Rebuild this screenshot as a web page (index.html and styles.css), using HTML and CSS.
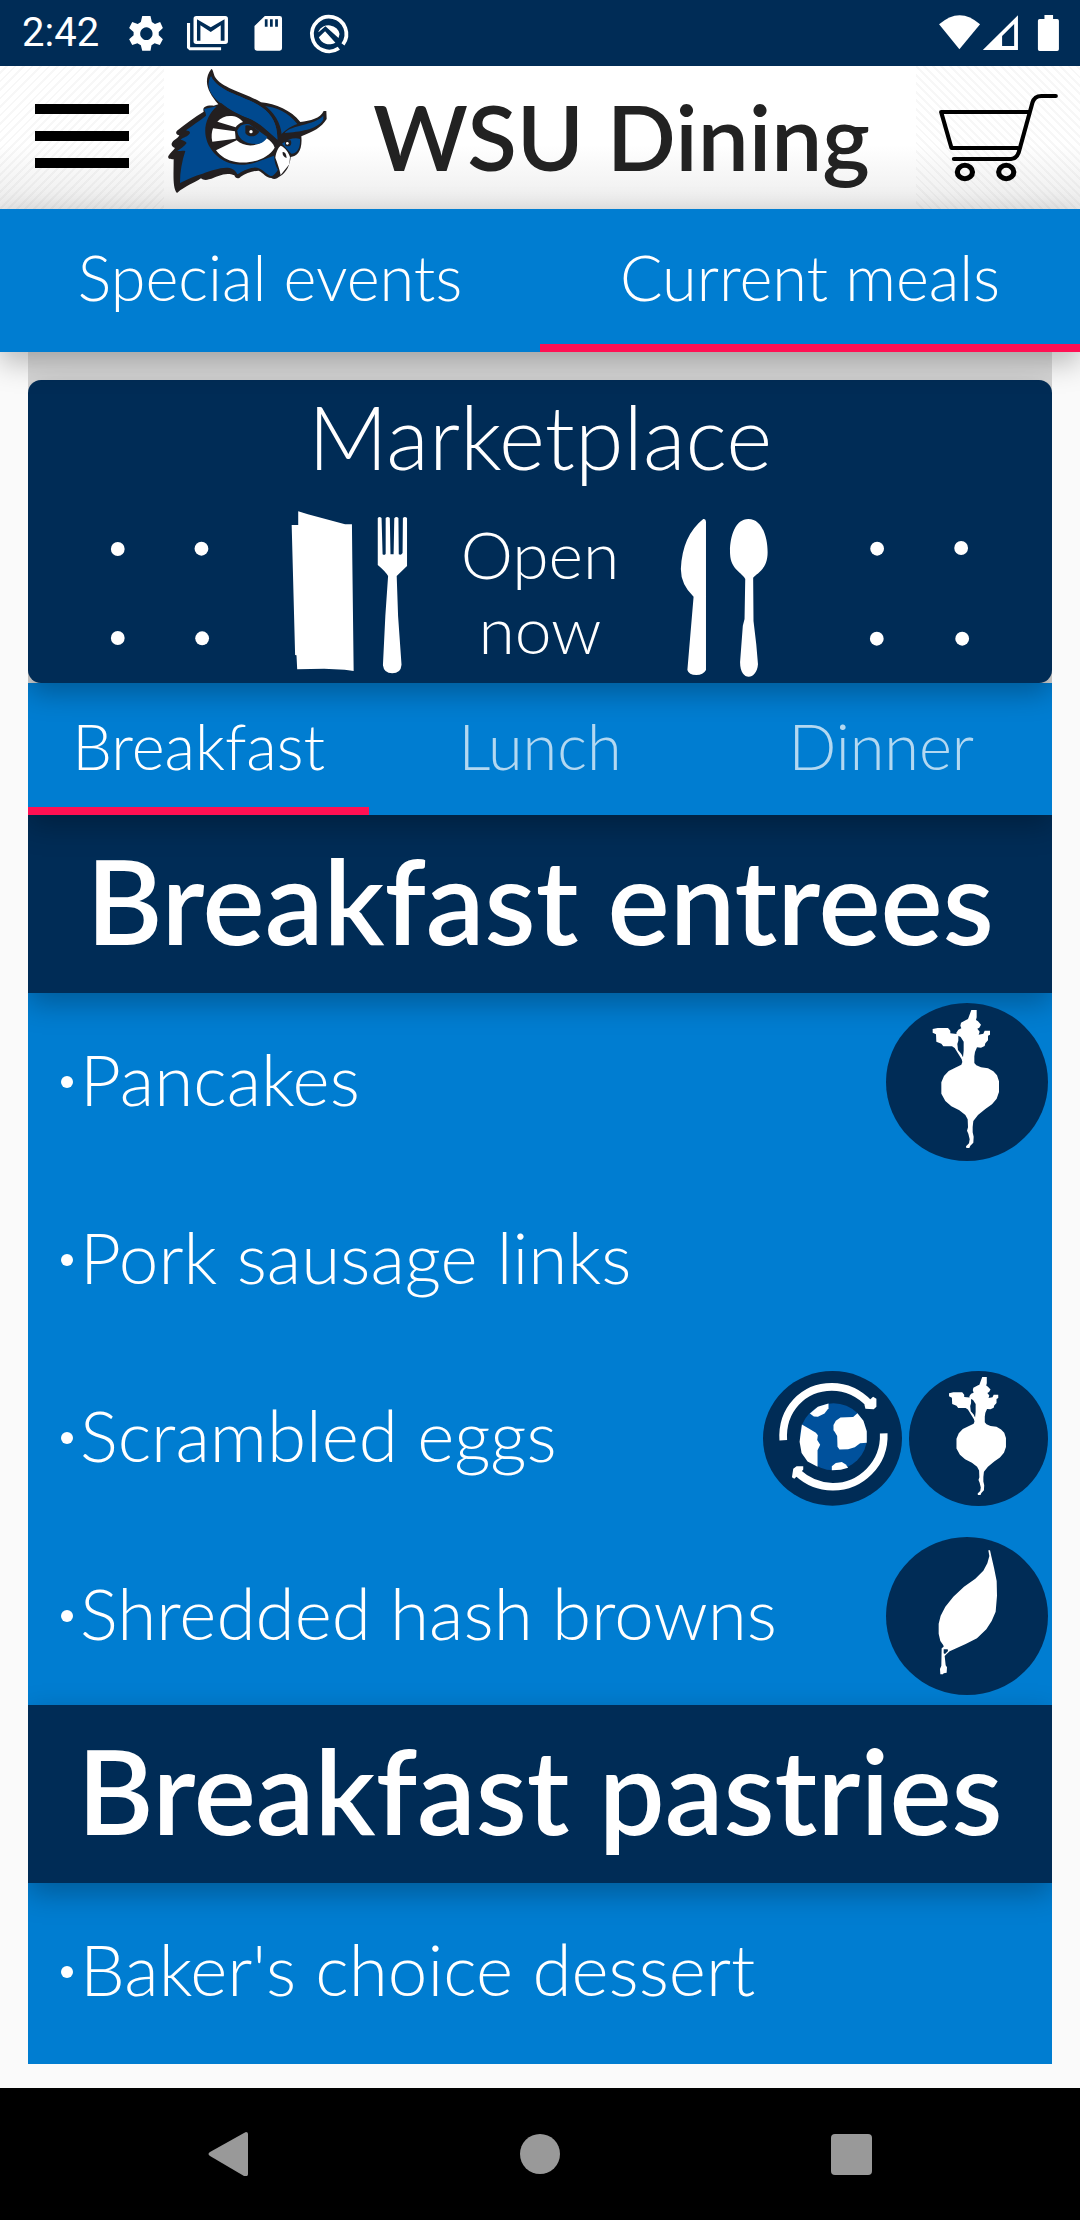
FILE: index.html
```html
<!DOCTYPE html>
<html lang="en">
<head>
<meta charset="utf-8">
<meta name="viewport" content="width=device-width, initial-scale=1">
<title>WSU Dining</title>
<link rel="stylesheet" href="styles.css">
</head>
<body>
<svg class="defs" aria-hidden="true">
  <symbol id="beet" viewBox="437 67 486 474" preserveAspectRatio="none">
    <ellipse cx="680" cy="304" rx="243" ry="237" fill="#002c56"/>
    <path fill="#fff" d="M693 88h16v22l-2 8 6 4 9 10-5 9-6 3 7 9-3 9 14-3 4-9h16v12l-6 3v14l-8 9-2 8-11 5-12-1-6 14-2 13v20l6 7 14 6 21 3 16 9 11 12 6 18v32l-7 20-14 17-20 14-22 18-14 18-2 18v16l3 13-1 18-9 9-3 7h-9l-1-5 9-9 2-12-4-17-4-9 3-10-1-24-7-13-18-14-24-12-18-16-12-22v-34l8-19 14-15 18-9 20-10 3-8-2-8-21-34-8-5h-26l-6-8-15-6-1-22-10-5v-11l15-3h31l7 8v8l19 2 5 6v14l-3 10 2 18 10 12 5 10 2-20v-27l-9-14-12-6-1-7 6-9 9-4-3-8 2-9 15-8 6-3zM688 168l6 3-2 12 2 12 4 5-6 16-2 20h-6v-40z"/>
  </symbol>
  <symbol id="leaf" viewBox="437 590 486 474" preserveAspectRatio="none">
    <ellipse cx="680" cy="827" rx="243" ry="237" fill="#002c56"/>
    <path fill="#fff" d="M744 630h5l4 18 8 34 8 40 1 44-4 48-12 28-16 25-28 27-34 17-48 22-9 8-6 6 3 28 4 6-1 16-9 2-2 3h-8l-1-16 4-10 1-52 6-5-1-4-9-13-5-22v-30l6-24 14-27 24-30 32-30 34-24 24-24 12-22 6-22z"/>
    <path fill="#002c56" d="M610 927h12l1 5-9 9-4-2z"/>
  </symbol>
  <symbol id="earth" viewBox="69 88 418 407" preserveAspectRatio="none">
    <ellipse cx="278" cy="291" rx="209" ry="203" fill="#002c56"/>
    <circle cx="281" cy="286" r="101" fill="#00519c"/>
    <g fill="#fff">
      <path d="M186 249l22 13 20 12 6 8-2 14 9 14-8 17v50l-30-16-18-26-6-34z"/>
      <path d="M210 216l24-20 32-10v14l-12 16-20 10-12-1z"/>
      <path d="M288 238l14-10 38-1 13-12 18 23 10 32v34l-20 2-16 12-20 6-26 1-6-9-1-32-7-12-4-5v-16z"/>
      <path d="M276 387v-12l12-10 18-3 12 8 7 10-22 6z"/>
    </g>
    <g fill="none" stroke="#fff" stroke-width="23" stroke-linejoin="round">
      <path d="M130 297C124 205 190 136 276 136c46 0 82 18 114 52"/>
      <path d="M432 276c4 92-70 162-154 161-42-1-76-16-104-42"/>
    </g>
    <path fill="#fff" d="M400 166l10 6v24l-8 7-25-1-3-12zM160 383l10-8h20v10l-12 14-15 14-7-5z"/>
  </symbol>
</svg>

<div class="status">
  <span class="clock">2:42</span>
  <svg class="status-left" viewBox="0 0 240 66" aria-hidden="true">
    <g transform="translate(-120) scale(.34436 .33333)" fill="#fff">
      <path fill-rule="evenodd" d="M413 48h24l4 18 9 6 15-6 8 18-12 12v10l12 12-9 17-15-5-9 6-3 16h-24l-4-16-10-6-15 5-9-17 13-12v-10l-13-12 9-18 16 6 9-6zM425 82a18 19 0 1 0 .1 0z"/>
      <path d="M543 69h9v73h90v9h-92l-7-7z"/>
      <path fill-rule="evenodd" d="M570 48h84q8 0 8 8v68q0 8-8 8h-84q-8 0-8-8V56q0-8 8-8zM572 58v64h10V76l30 20 29-20v46h11V58l-40 24z"/>
      <path fill-rule="evenodd" d="M769 48h43q7 0 7 7v90q0 7-7 7h-66q-7 0-7-7V78zM769 58v22h8V58zM784 58v22h8V58zM799 58v22h8V58z"/>
      <path fill="none" stroke="#fff" stroke-width="11" d="M984 145A50 52 0 1 1 996 133"/>
      <path d="M925 94a32 30 0 0 1 61 8l-3 12-38-35-20 18zM926 112l18-18 30 34a32 30 0 0 1-48-16z"/>
    </g>
  </svg>
  <svg class="status-right" viewBox="0 0 130 66" aria-hidden="true">
    <g transform="translate(-393) scale(.34436 .33333)" fill="#fff">
      <path d="M1156 73q60-55 119 0l-60 75z"/>
      <path fill-rule="evenodd" d="M1385 46v104h-102zM1374 72l-35 36v30h35z"/>
      <path d="M1462 45h25v12h12q5 0 5 5v86q0 5-5 5h-51q-5 0-5-5V62q0-5 5-5h14z"/>
    </g>
  </svg>
</div>

<header class="appbar">
  <button class="tool menu" aria-label="Menu"><span></span><span></span><span></span></button>
  <svg class="owl" viewBox="54 21 477 375" role="img" aria-label="WSU owl">
    <path fill="#231f20" d="M184 24c5 0 6 14 11 24 20 34 92 48 138 76 44 4 90 24 118 59 30-4 60-10 70-33h8l1 24c-16 26-40 38-76 52 4 42-12 60-32 62-2 24-12 46-32 58-10 8-18 10-26 5-18-2-22-14-38-22-20 0-40 10-54 18-6 8-16 6-19-4-26-12-50 4-76 12-10 4-18 2-24-3-20 14-46 22-72 44-14-14-10-60-10-101-14 0-18-2-16-10 6-10 14-16 20-24-10-4-12-10-9-16 8-12 18-12 22-22-10-2-12-8-7-14 26-20 50-40 80-57-4-12 4-20 30-18l14-4c-30-36-48-70-21-106z"/>
    <g fill="#00498f">
      <path d="M183 46c24 50 102 58 154 94 28 20 46 50 45 96-30-24-50-50-88-64-60-26-142-70-111-126z"/>
      <path d="M338 134c42 4 78 20 104 55-22 8-40 20-50 34-4-38-22-66-54-89z"/>
      <path d="M404 216c20-26 88-22 116-52v12c-18 30-72 36-116 40z"/>
      <path d="M200 136c-40 38-48 94-8 140 30 34 78 42 120 30l60-22c2 18 4 30 12 42-8 14-18 22-24 18-14-6-28-26-48-24-22 2-36 12-50 20-16-34-62-16-104-2-24 6-44 16-68 28 0-34 6-66 16-96-8-2-10 0-24 0 10-8 20-12 28-24-4-6-10-8-18-10 8-8 22-8 28-20 0-6-6-6-12-8 18-14 40-28 60-44 0-8-4-14-6-20z"/>
    </g>
    <ellipse cx="280" cy="232" rx="100" ry="76" fill="#231f20"/>
    <g fill="#fff">
      <path d="M202 182c12-14 30-20 50-16 16 4 22 12 27 17-12 4-18 10-22 16z"/>
      <path d="M189 202l66 9 2 22-70 9c-4-14-2-28 2-40z"/>
      <path d="M198 268l62-30c24 22 66 20 90-6 12 8 20 16 24 28-20 34-70 50-116 43-26-4-46-16-60-35z"/>
      <path d="M376 290c2-18 10-32 16-36 14 6 24 20 28 34l-2 22-26 32c-4-20-10-36-16-52z"/>
    </g>
    <g fill="#00498f">
      <path d="M262 208c8-16 20-22 36-18l54 38c-12 24-36 24-58 18-20-6-32-22-32-38z"/>
      <path d="M396 248c16-14 40-20 54-14 2 28-10 44-26 44z"/>
      <path d="M183 46c24 50 102 58 154 94 28 20 46 50 45 96-30-24-50-50-88-64-60-26-142-70-111-126z"/>
    </g>
    <path fill="none" stroke="#231f20" stroke-width="7" d="M210 128c24 20 56 38 84 48 38 16 60 42 88 66M392 222c-4-38-22-66-54-89"/>
    <path fill="#231f20" d="M286 194c12-4 28 4 42 18-10 18-34 18-42 4zM404 238h18c6 14-4 22-16 16zM398 273q10-2 12 18-14-4-12-18z"/>
    <circle cx="303" cy="212" r="5" fill="#fff"/><circle cx="412" cy="247" r="4" fill="#fff"/>
  </svg>
  <h1>WSU Dining</h1>
  <button class="tool cart" aria-label="Cart">
    <svg viewBox="0 0 124 96" aria-hidden="true">
      <g transform="translate(-395 -91) scale(.34436 .33333)" fill="none" stroke="#000" stroke-width="12" stroke-linecap="round" stroke-linejoin="round">
        <path d="M1416 339H1162l30 108h192M1495 291h-42q-20 0-26 20l-40 150q-6 18-22 19H1199"/>
        <g stroke-width="15"><ellipse cx="1231" cy="519" rx="22" ry="20"/><ellipse cx="1351" cy="519" rx="22" ry="20"/></g>
      </g>
    </svg>
  </button>
</header>

<nav class="tabs main-tabs">
  <button>Special events</button>
  <button class="active" aria-current="page">Current meals</button>
</nav>

<main>
  <section class="venue">
    <h2>Marketplace</h2>
    <div class="venue-row">
      <svg viewBox="0 0 432 180" aria-hidden="true">
        <g transform="translate(-28 -10) scale(.34436 .33333)" fill="#fff">
          <ellipse cx="342" cy="177" rx="20" ry="21"/><ellipse cx="585" cy="176" rx="20" ry="21"/>
          <ellipse cx="342" cy="444" rx="20" ry="21"/><ellipse cx="587" cy="445" rx="20" ry="21"/>
          <path d="M866 64l28 9 108 30h20l1 100 4 340-26-4-60-3-78 2-2-42-4-1-10-390h19z"/>
          <path d="M1097 84q5-6 11 0l3 109q6 4 9-2V84q6-6 12 0l2 109h9l2-108q6-8 12-1l1 109q7 4 11-4l1-105q6-6 12 0v144l-30 30 4 120 10 146q-2 26-27 26-24 0-27-24l7-148 8-120q-8-14-30-33z"/>
        </g>
      </svg>
      <p>Open<br>now</p>
      <svg viewBox="0 0 432 180" aria-hidden="true">
        <g transform="translate(-80 -10) scale(.34436 .33333)" fill="#fff">
          <path d="M474 87q8-1 8 10v443q-8 15-28 15-22 0-26-15l18-220q-37-36-37-83 4-100 65-150z"/>
          <path d="M605 87c40 0 56 54 56 100 0 52-32 64-42 76l1 130 8 70 5 60c-4 50-52 52-52-6l8-110 5-20 2-120c-8-18-42-28-44-74-2-50 14-106 53-106z"/>
          <ellipse cx="979" cy="176" rx="20" ry="21"/><ellipse cx="1223" cy="174" rx="20" ry="21"/>
          <ellipse cx="978" cy="446" rx="20" ry="21"/><ellipse cx="1226" cy="446" rx="20" ry="21"/>
        </g>
      </svg>
    </div>
  </section>

  <nav class="tabs meal-tabs">
    <button class="active" aria-current="true">Breakfast</button>
    <button>Lunch</button>
    <button>Dinner</button>
  </nav>

  <section class="group">
    <h3>Breakfast entrees</h3>
    <ul>
      <li><span>Pancakes</span><svg class="badge"><use href="#beet"/></svg></li>
      <li><span>Pork sausage links</span></li>
      <li><span>Scrambled eggs</span><svg class="badge small"><use href="#earth"/></svg><svg class="badge small"><use href="#beet"/></svg></li>
      <li><span>Shredded hash browns</span><svg class="badge"><use href="#leaf"/></svg></li>
    </ul>
  </section>
  <section class="group">
    <h3>Breakfast pastries</h3>
    <ul>
      <li><span>Baker's choice dessert</span></li>
    </ul>
  </section>
</main>

<footer class="sysnav">
  <button aria-label="Back"><svg viewBox="0 0 44 44"><path d="M40 0q2 0 2 2v40q0 3-4 2L4 24q-3-2 0-4L38 1z"/></svg></button>
  <button aria-label="Home"><svg viewBox="0 0 44 44"><circle cx="22" cy="22" r="20"/></svg></button>
  <button aria-label="Recent apps"><svg viewBox="0 0 44 44"><rect x="1" y="2" width="41" height="41" rx="4"/></svg></button>
</footer>
</body>
</html>
```
FILE: styles.css
```css
:root {
  --navy: #002c56;
  --blue: #007dd1;
  --pink: #ff1053;
  --shadow: 0 10px 28px rgba(0, 0, 0, .28);
}

* { box-sizing: border-box; }

body {
  margin: 0;
  min-height: 100vh;
  display: flex;
  flex-direction: column;
  background: #fafafa;
  color: #fff;
  font-family: Lato, "Open Sans", sans-serif;
  font-weight: 300;
}

h1, h2, h3, p, ul { margin: 0; padding: 0; }

button {
  margin: 0;
  padding: 0;
  border: 0;
  background: none;
  color: inherit;
  font: inherit;
}

svg { display: block; flex: none; }

.defs { position: absolute; width: 0; height: 0; }

.status {
  display: flex;
  align-items: center;
  height: 66px;
  padding: 0 16px 0 22px;
  background: var(--navy);
}
.clock {
  width: 98px;
  font: 400 40px/66px Roboto, sans-serif;
}
.status-left { width: 240px; height: 66px; }
.status-right { width: 130px; height: 66px; margin-left: auto; }

.appbar {
  display: flex;
  align-items: center;
  height: 143px;
  background: linear-gradient(#fff 55%, #ececec);
}
.tool {
  flex: none;
  align-self: stretch;
  width: 164px;
  display: flex;
  flex-direction: column;
  justify-content: center;
  align-items: center;
  gap: 17px;
}
.menu {
  padding-bottom: 4px;
  background: repeating-linear-gradient(135deg, transparent 0 4px, rgba(0, 0, 0, .03) 4px 6px);
}
.cart { background: repeating-linear-gradient(45deg, transparent 0 4px, rgba(0, 0, 0, .03) 4px 6px); }
.menu span { width: 94px; height: 10px; background: #000; }
.cart svg { width: 124px; height: 96px; }
.owl {
  width: 159px;
  height: 125px;
  margin: 2px 0 0 4px;
  align-self: flex-start;
}
h1 {
  flex: 1;
  color: #222;
  font-size: 91px;
  font-weight: 600;
  line-height: 139px;
  padding-bottom: 4px;
  text-align: center;
}

.tabs {
  display: flex;
  position: relative;
  background: var(--blue);
  box-shadow: var(--shadow);
  font-size: 63px;
}
.tabs button {
  flex: 1;
  border-bottom: 8px solid transparent;
}
.tabs .active { border-bottom-color: var(--pink); }
.main-tabs { z-index: 2; height: 143px; }

main {
  margin: 0 28px 24px;
  padding-top: 28px;
  background: #dcdcdc;
  overflow: clip;
}

.venue {
  position: relative;
  z-index: 1;
  height: 303px;
  border-radius: 13px;
  background: var(--navy);
  box-shadow: var(--shadow);
  text-align: center;
}
.venue h2 {
  padding-bottom: 8px;
  font-size: 88px;
  font-weight: 300;
  line-height: 112px;
}
.venue-row {
  display: grid;
  grid-template-columns: 1fr 160px 1fr;
}
.venue-row svg { width: 100%; height: 180px; }
.venue-row p {
  padding-top: 16px;
  font-size: 66px;
  line-height: 75px;
}

.meal-tabs { height: 132px; }
.meal-tabs button { color: rgba(255, 255, 255, .7); }
.meal-tabs .active { color: #fff; }

.group { background: var(--blue); }
.group h3 {
  padding-bottom: 8px;
  background: var(--navy);
  box-shadow: var(--shadow);
  font-size: 117px;
  font-weight: 600;
  line-height: 170px;
  text-align: center;
}
.group ul { list-style: none; }
.group:last-child ul { padding-bottom: 3px; }
.group li {
  display: flex;
  align-items: center;
  gap: 7px;
  height: 178px;
  padding: 0 4px 0 33px;
  font-size: 71px;
}
.group li::before {
  content: "";
  width: 12px;
  height: 12px;
  border-radius: 50%;
  background: #fff;
}
.group li span { flex: 1; padding-bottom: 8px; }
.badge { width: 162px; height: 158px; }
.badge.small { width: 139px; height: 135px; }

.sysnav {
  display: flex;
  justify-content: center;
  align-items: center;
  gap: 268px;
  height: 132px;
  margin-top: auto;
  background: #000;
}
.sysnav svg { width: 44px; height: 44px; fill: #999; }
```
